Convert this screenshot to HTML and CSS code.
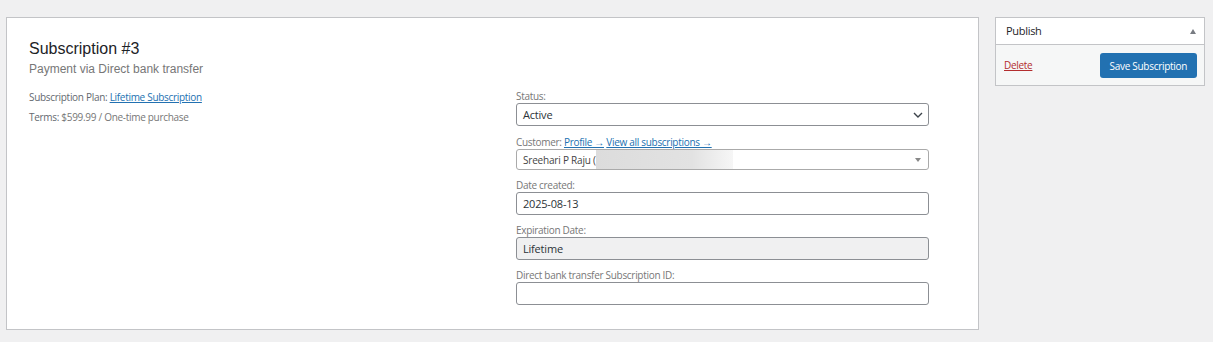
FILE: index.html
```html
<!DOCTYPE html>
<html lang="en">
<head>
    <meta charset="UTF-8">
    <meta name="viewport" content="width=device-width, initial-scale=1.0">
    <title>Edit Subscription</title>
    <link rel="stylesheet" href="styles.css">
</head>
<body>
    <div class="wrap">
        <div class="subscription-panel">
            <h2 class="sub-title">Subscription #3</h2>
            <p class="sub-meta">Payment via Direct bank transfer</p>

            <div class="sub-columns">
                <div class="sub-details">
                    <p><span class="detail-label">Subscription Plan:</span> <a href="#">Lifetime Subscription</a></p>
                    <p><span class="detail-label">Terms:</span> $599.99 / One-time purchase</p>
                </div>

                <div class="sub-fields">
                    <div class="field">
                        <label for="status">Status:</label>
                        <div class="select-box">
                            <span>Active</span>
                            <svg class="chevron" width="10" height="6" viewBox="0 0 10 6"><path d="M1 1 L5 5 L9 1" fill="none" stroke="#3c434a" stroke-width="1.4"/></svg>
                        </div>
                    </div>

                    <div class="field">
                        <label>Customer: <a href="#">Profile &rarr;</a> <a href="#">View all subscriptions &rarr;</a></label>
                        <div class="select-box customer">
                            <span>Sreehari P Raju (</span>
                            <span class="redacted"></span>
                            <span class="caret"></span>
                        </div>
                    </div>

                    <div class="field">
                        <label for="created">Date created:</label>
                        <input type="text" id="created" value="2025-08-13">
                    </div>

                    <div class="field">
                        <label for="expires">Expiration Date:</label>
                        <input type="text" id="expires" value="Lifetime" class="readonly" readonly>
                    </div>

                    <div class="field">
                        <label for="gateway-id">Direct bank transfer Subscription ID:</label>
                        <input type="text" id="gateway-id">
                    </div>
                </div>
            </div>
        </div>

        <div class="publish-box">
            <div class="publish-head">
                <span>Publish</span>
                <span class="toggle"></span>
            </div>
            <div class="publish-actions">
                <a href="#" class="delete-link">Delete</a>
                <button type="button" class="save-btn">Save Subscription</button>
            </div>
        </div>
    </div>
</body>
</html>
```

FILE: styles.css
```css
/* Reset and basic layout */
* {
    margin: 0;
    padding: 0;
    box-sizing: border-box;
}

body {
    font-family: "Open Sans", "Noto Sans", sans-serif;
    font-size: 10px;
    letter-spacing: -0.3px;
    background-color: #f0f0f1;
    color: #3c434a;
}

a {
    color: #2271b1;
}

.wrap {
    display: flex;
    align-items: flex-start;
    gap: 16px;
    padding: 17px 8px 0 6px;
}

/* Main subscription panel */
.subscription-panel {
    width: 973px;
    height: 313px;
    background-color: white;
    border: 1px solid #c3c4c7;
    padding: 21px 49px 0 22px;
}

.sub-title {
    font-family: "Liberation Sans", Arial, sans-serif;
    font-weight: normal;
    font-size: 16px;
    letter-spacing: 0;
    color: #1d2327;
    line-height: 20px;
}

.sub-meta {
    font-family: "Liberation Sans", Arial, sans-serif;
    font-size: 12px;
    letter-spacing: 0;
    color: #777;
    line-height: 18px;
    margin-top: 1px;
}

.sub-columns {
    display: grid;
    grid-template-columns: 1fr 413px;
    margin-top: 9px;
}

.sub-details p {
    color: #777;
    line-height: 14px;
    margin-top: 3px;
    margin-bottom: 6px;
}

.detail-label {
    color: #646970;
}

/* Form fields */
.sub-fields {
    padding-top: 2px;
}

.field {
    margin-bottom: 8px;
}

.field:first-child {
    margin-bottom: 9px;
}

.field label {
    display: block;
    color: #777;
    line-height: 14px;
}

.select-box,
.field input {
    display: flex;
    align-items: center;
    width: 100%;
    height: 23px;
    border: 1px solid #8c8f94;
    border-radius: 3px;
    background-color: white;
    padding: 0 6px;
    font-family: "Open Sans", "Noto Sans", sans-serif;
    font-size: 11px;
    letter-spacing: -0.2px;
    color: #2c3338;
}

.select-box {
    justify-content: space-between;
    padding-right: 5px;
}

.select-box.customer {
    justify-content: flex-start;
    height: 21px;
    border-color: #aaa;
    font-size: 10px;
    color: #444;
}

.redacted {
    width: 137px;
    height: 19px;
    background: linear-gradient(to right, #dcdcdc, #e2e2e2 70%, #f6f6f6);
}

.caret {
    margin-left: auto;
    margin-right: 2px;
    width: 0;
    height: 0;
    border-left: 3.5px solid transparent;
    border-right: 3.5px solid transparent;
    border-top: 4px solid #888;
}

.field input.readonly {
    background-color: #f0f0f1;
}

/* Publish box */
.publish-box {
    width: 210px;
    background-color: white;
    border: 1px solid #c3c4c7;
}

.publish-head {
    display: flex;
    justify-content: space-between;
    align-items: center;
    height: 27px;
    padding: 0 8px 0 10px;
    border-bottom: 1px solid #c3c4c7;
    font-size: 11px;
    color: #1d2327;
}

.publish-head span:first-child {
    margin-top: -2px;
}

.toggle {
    width: 0;
    height: 0;
    border-left: 3px solid transparent;
    border-right: 3px solid transparent;
    border-bottom: 5px solid #787c82;
}

.publish-actions {
    display: flex;
    justify-content: space-between;
    align-items: center;
    background-color: #f6f7f7;
    padding: 8px 7px 7px 8px;
}

.delete-link {
    color: #b32d2e;
    margin-top: -2px;
}

.save-btn {
    background-color: #2271b1;
    color: white;
    border: none;
    border-radius: 3px;
    height: 25px;
    padding: 0 10px;
    font-family: "Open Sans", "Noto Sans", sans-serif;
    font-size: 10px;
    letter-spacing: -0.3px;
    cursor: pointer;
}
```
